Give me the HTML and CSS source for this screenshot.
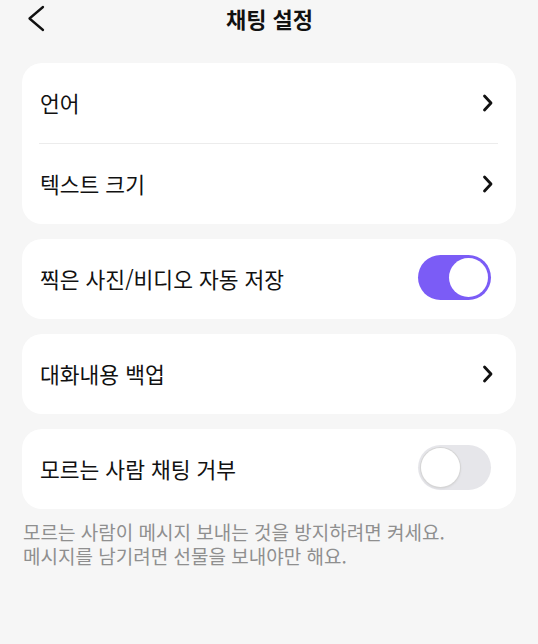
FILE: index.html
```html
<!DOCTYPE html>
<html lang="ko">
<head>
  <meta charset="UTF-8" />
  <meta name="viewport" content="width=device-width, initial-scale=1.0" />
  <title>채팅 설정</title>
  <link rel="stylesheet" href="styles.css">
</head>
<body>
  <div class="header">
    <button class="back" aria-label="뒤로">
      <svg width="24" height="32" viewBox="0 0 24 32">
        <path d="M19 6 L5.5 17.5 L19 29" fill="none" stroke="#111" stroke-width="2.3" stroke-linecap="round" stroke-linejoin="round" />
      </svg>
    </button>
    <h1>채팅 설정</h1>
  </div>

  <div class="content">
    <div class="card">
      <div class="row">
        <span class="label">언어</span>
        <svg class="chev" width="14" height="20" viewBox="0 0 14 20">
          <path d="M3.5 3 L10 10 L3.5 17" fill="none" stroke="#111" stroke-width="2.8" stroke-linecap="round" stroke-linejoin="round" />
        </svg>
      </div>
      <div class="divider"></div>
      <div class="row">
        <span class="label">텍스트 크기</span>
        <svg class="chev" width="14" height="20" viewBox="0 0 14 20">
          <path d="M3.5 3 L10 10 L3.5 17" fill="none" stroke="#111" stroke-width="2.8" stroke-linecap="round" stroke-linejoin="round" />
        </svg>
      </div>
    </div>

    <div class="card">
      <div class="row">
        <span class="label">찍은 사진/비디오 자동 저장</span>
        <div class="toggle on"><div class="knob"></div></div>
      </div>
    </div>

    <div class="card">
      <div class="row">
        <span class="label">대화내용 백업</span>
        <svg class="chev" width="14" height="20" viewBox="0 0 14 20">
          <path d="M3.5 3 L10 10 L3.5 17" fill="none" stroke="#111" stroke-width="2.8" stroke-linecap="round" stroke-linejoin="round" />
        </svg>
      </div>
    </div>

    <div class="card">
      <div class="row">
        <span class="label">모르는 사람 채팅 거부</span>
        <div class="toggle"><div class="knob"></div></div>
      </div>
    </div>

    <div class="note">
      <p>모르는 사람이 메시지 보내는 것을 방지하려면 켜세요.</p>
      <p>메시지를 남기려면 선물을 보내야만 해요.</p>
    </div>
  </div>
</body>
</html>
```

FILE: styles.css
```css
body {
  margin: 0;
  background-color: #f6f6f6;
  font-family: "Noto Sans CJK KR", "Noto Sans", sans-serif;
  color: #111;
}
.header {
  display: flex;
  justify-content: center;
  align-items: center;
  height: 36px;
  position: relative;
}
.header h1 {
  margin: 0 0 0 1px;
  font-size: 22px;
  font-weight: 700;
  line-height: 36px;
}
.back {
  position: absolute;
  left: 24px;
  top: 1px;
  padding: 0;
  border: none;
  background: none;
  display: flex;
}
.content {
  padding: 27px 22px 0;
  display: flex;
  flex-direction: column;
  gap: 15px;
}
.card {
  background-color: #fff;
  border-radius: 20px;
}
.row {
  height: 80px;
  display: flex;
  align-items: center;
  justify-content: space-between;
  padding: 0 21px 0 18px;
}
.label {
  font-size: 21.5px;
  line-height: 28px;
}
.chev {
  display: block;
}
.divider {
  height: 1px;
  background-color: #ececec;
  margin: 0 18px 0 17px;
}
.toggle {
  width: 73px;
  height: 45px;
  border-radius: 23px;
  background-color: #e6e6ea;
  display: flex;
  align-items: center;
  padding: 0 3px;
  box-sizing: border-box;
  margin: -3px 4px 0 0;
}
.toggle .knob {
  width: 39px;
  height: 39px;
  border-radius: 50%;
  background-color: #fff;
  box-shadow: 0 0 0 1px #d6d6d6, 0 1px 3px rgba(0, 0, 0, 0.12);
}
.toggle.on {
  background-color: #7b5cf6;
  justify-content: flex-end;
}
.toggle.on .knob {
  box-shadow: none;
}
.note {
  margin: -4px 0 0 1px;
  color: #8f8f8f;
}
.note p {
  margin: 0;
  font-size: 19px;
  line-height: 24px;
  height: 24px;
  overflow: visible;
}
```
